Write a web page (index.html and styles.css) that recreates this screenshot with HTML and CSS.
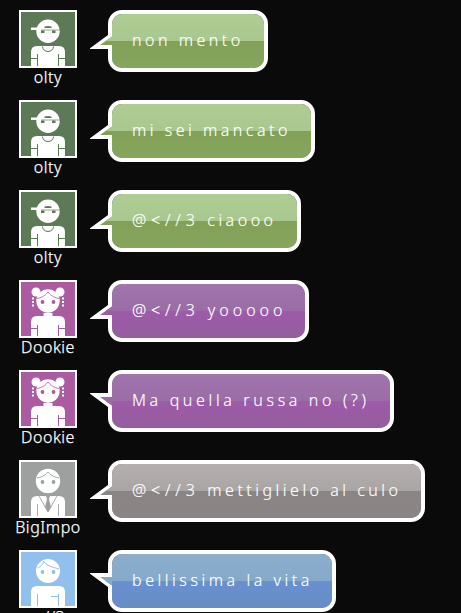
FILE: index.html
```
<!DOCTYPE html>
<html lang="it">
<head>
<meta charset="utf-8">
<title>Chat</title>
<link rel="stylesheet" href="styles.css">
</head>
<body>
<svg class="defs" aria-hidden="true">
  <defs>
    <g id="body">
      <path d="M12 56V42q0-6 6-6H40q6 0 6 6V56z" fill="#fff"/>
    </g>
    <g id="cap-boy">
      <use href="#body"/>
      <circle cx="29" cy="21.300" r="11.700" fill="#fff"/>
      <path d="M23.500 36.500a5.500 5 0 0 0 11 0M12 48.500h6M40 48.500h6M18.500 44v12M39.500 44v12" fill="none" stroke="currentColor"/>
      <path d="M12 17.500h28v1H27l-3 1.500H12z" fill="#fff"/>
      <path d="M25.500 16.500q3.500-1 7 0v1.500h-7zM22 20.500h3.500v2.500H22zM33 20.500h3.500v2.500H33z" fill="currentColor"/>
      <path d="M22 20h19" stroke="currentColor" stroke-opacity=".65"/>
    </g>
    <g id="bun-girl">
      <path d="M12 56V42q0-6 6-6h6.500v-3h9v3H40q6 0 6 6V56z" fill="#fff"/>
      <circle cx="29" cy="21" r="11.700" fill="#fff"/>
      <circle cx="17" cy="12" r="4.500" fill="#fff"/><circle cx="41" cy="12" r="4.500" fill="#fff"/>
      <path d="M14 17.500v9M44 17.500v9" stroke="#fff" stroke-width="2" stroke-dasharray="2 1.500"/>
      <path d="M29 12C26 16 22 18 18 18.500M29 12c3 4 7 6 11 6.500" fill="none" stroke="currentColor" stroke-width=".8"/>
      <path d="M12 48.500h6M40 48.500h6M18.500 45v11M39.500 45v11" fill="none" stroke="currentColor"/>
      <circle cx="23.500" cy="22" r="1.900" fill="currentColor"/><circle cx="34.500" cy="22" r="1.900" fill="currentColor"/>
    </g>
    <g id="suit-man">
      <use href="#body"/>
      <circle cx="29" cy="21" r="12.200" fill="#fff"/>
      <path d="M29 12c-3 4-7 5-11 6M29 12c3 4 7 5 11 6M18.500 44v12M39.500 44v12M20 36l9 16 9-16" fill="none" stroke="currentColor" stroke-width=".9"/>
      <path d="M27 36h4l-1 3 2 8-3 5-3-5 2-8z" fill="currentColor"/>
      <circle cx="23.500" cy="22" r="1.900" fill="currentColor"/><circle cx="34.500" cy="22" r="1.900" fill="currentColor"/>
    </g>
    <g id="plain-man">
      <use href="#body"/>
      <circle cx="29" cy="21" r="12" fill="#fff"/>
      <path d="M24.500 11c0 3-3 6-6 7M24.500 11c3 5 9 6 15.500 8M18.500 44v12M39.500 44v12M32 46.500h7" fill="none" stroke="currentColor"/>
      <circle cx="23.500" cy="22" r="1.900" fill="currentColor"/><circle cx="34.500" cy="22" r="1.900" fill="currentColor"/>
    </g>
    <g id="tail">
      <path d="M22 9 18 12 0 25.300V26h22z" fill="#fff"/>
      <path d="M22 13.500 10 22h12z" fill="currentColor"/>
      <path d="M22 13.500 15.600 18H22z" class="tail-top"/>
    </g>
  </defs>
</svg>
<main class="chat">
  <article class="message green">
    <div class="user"><svg class="avatar" viewBox="2 2 54 54"><use href="#cap-boy"/></svg><span class="name">olty</span></div>
    <div class="bubble w1"><svg class="tail" viewBox="0 0 22 36"><use href="#tail"/></svg>non mento</div>
  </article>
  <article class="message green">
    <div class="user"><svg class="avatar" viewBox="2 2 54 54"><use href="#cap-boy"/></svg><span class="name">olty</span></div>
    <div class="bubble w2"><svg class="tail" viewBox="0 0 22 36"><use href="#tail"/></svg>mi sei mancato</div>
  </article>
  <article class="message green">
    <div class="user"><svg class="avatar" viewBox="2 2 54 54"><use href="#cap-boy"/></svg><span class="name">olty</span></div>
    <div class="bubble w3"><svg class="tail" viewBox="0 0 22 36"><use href="#tail"/></svg><span class="rose">@&lt;//3</span> ciaooo</div>
  </article>
  <article class="message purple">
    <div class="user"><svg class="avatar" viewBox="2 2 54 54"><use href="#bun-girl"/></svg><span class="name">Dookie</span></div>
    <div class="bubble w4"><svg class="tail" viewBox="0 0 22 36"><use href="#tail"/></svg><span class="rose">@&lt;//3</span> yooooo</div>
  </article>
  <article class="message purple">
    <div class="user"><svg class="avatar" viewBox="2 2 54 54"><use href="#bun-girl"/></svg><span class="name">Dookie</span></div>
    <div class="bubble w5"><svg class="tail up" viewBox="0 0 22 36"><use href="#tail"/></svg>Ma quella russa no (?)</div>
  </article>
  <article class="message gray">
    <div class="user"><svg class="avatar" viewBox="2 2 54 54"><use href="#suit-man"/></svg><span class="name">BigImpo</span></div>
    <div class="bubble w6"><svg class="tail" viewBox="0 0 22 36"><use href="#tail"/></svg><span class="rose">@&lt;//3</span> mettiglielo al culo</div>
  </article>
  <article class="message blue">
    <div class="user"><svg class="avatar" viewBox="2 2 54 54"><use href="#plain-man"/></svg><span class="name short">&lt;//3</span></div>
    <div class="bubble w7"><svg class="tail up" viewBox="0 0 22 36"><use href="#tail"/></svg>bellissima la vita</div>
  </article>
</main>
</body>
</html>
```
FILE: styles.css
```
* { box-sizing: border-box; }
body { margin: 0; height: 613px; overflow: hidden; background: #0a0a0a; color: #fff; }
.defs { position: absolute; width: 0; height: 0; }
.chat { padding: 10px 0 0 8px; }
.message { display: flex; gap: 20px; height: 90px; }
.user { flex: 0 0 80px; display: flex; flex-direction: column; align-items: center; }
.avatar { display: block; flex: none; width: 58px; height: 58px; border: 2px solid #fff; background: var(--avatar); color: var(--avatar); }
.name { font: 300 16px/18px "Noto Sans", sans-serif; letter-spacing: .55px; -webkit-text-stroke: .25px #fff; }
.short { padding-left: 3px; }
.bubble {
  position: relative; height: 62px; padding: 0 0 0 20px; white-space: nowrap;
  border: 4px solid #fff; border-radius: 14px;
  background: linear-gradient(var(--a), var(--b) 50%, var(--c) 50%, var(--d)) padding-box;
  font: 300 16px/53px "Noto Sans", sans-serif; letter-spacing: 3.5px;
  -webkit-text-stroke: .15px #fff;
}
.rose { letter-spacing: 4.8px; }
.tail { position: absolute; left: -22px; top: 9px; width: 22px; height: 36px; color: var(--c); }
.tail.up { transform: scaleY(-1); color: var(--b); }
.tail-top { fill: var(--b); }
.up .tail-top { fill: var(--c); }
.green { --avatar: #5b7a55; --a: #aecd93; --b: #a9c88f; --c: #83a057; --d: #86a65d; }
.purple { --avatar: #ab5ba1; --a: #a174ae; --b: #9a6da7; --c: #9d5ba8; --d: #955d9f; }
.gray { --avatar: #9da09e; --a: #b5b0af; --b: #a9a5a4; --c: #898586; --d: #8b8485; }
.blue { --avatar: #92c0ec; --a: #8cadcf; --b: #85aac8; --c: #6990cf; --d: #678dc5; }
.w1 { width: 160px; }
.w2 { width: 207px; }
.w3 { width: 193px; }
.w4 { width: 201px; letter-spacing: 4px; }
.w5 { width: 286px; letter-spacing: 3.65px; }
.w6 { width: 317px; }
.w7 { width: 228px; letter-spacing: 3.55px; }
```
